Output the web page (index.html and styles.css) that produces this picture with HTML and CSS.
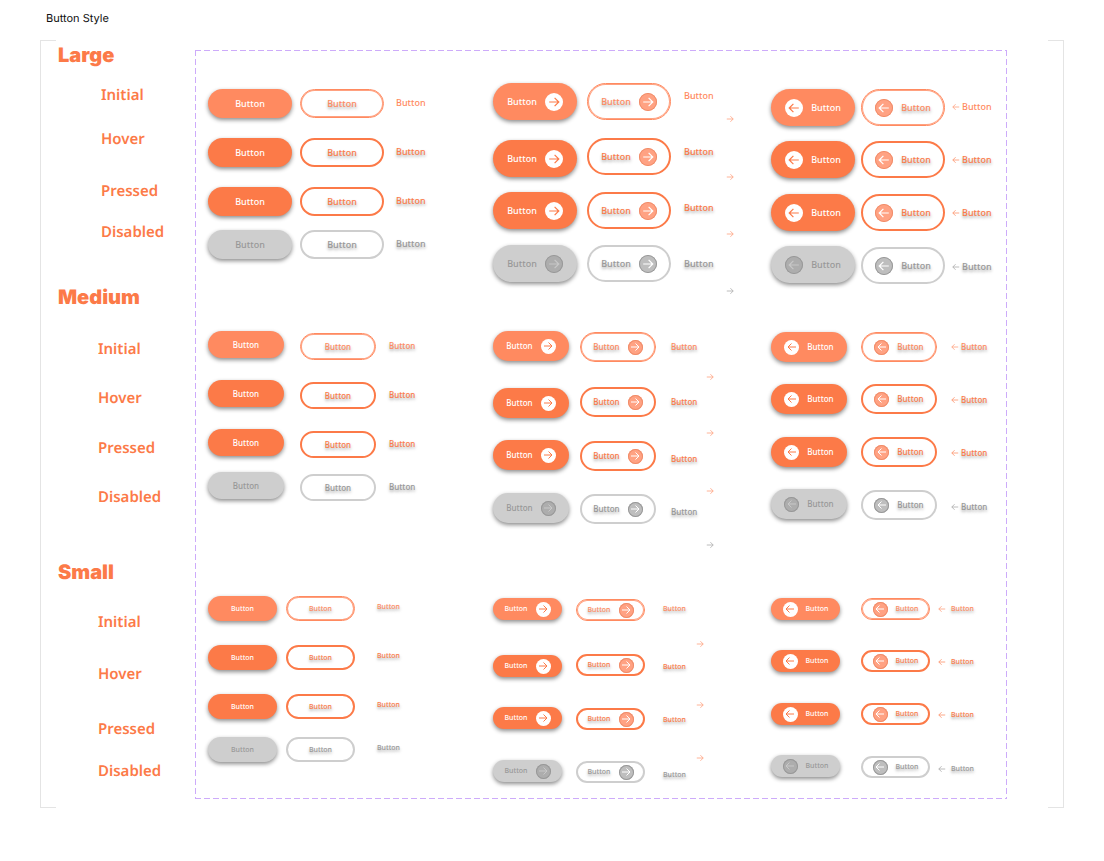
FILE: index.html
```
<!DOCTYPE html>
<html lang="en">
<head>
<meta charset="utf-8">
<meta name="viewport" content="width=device-width, initial-scale=1">
<title>Button Style</title>
<link rel="stylesheet" href="styles.css">
</head>
<body>
<h1 class="title">Button Style</h1>
<main class="board">
  <aside class="legend">
    <section class="legend-group large"><h2>Large</h2><ul><li>Initial</li><li>Hover</li><li>Pressed</li><li>Disabled</li></ul></section>
    <section class="legend-group medium"><h2>Medium</h2><ul><li>Initial</li><li>Hover</li><li>Pressed</li><li>Disabled</li></ul></section>
    <section class="legend-group small"><h2>Small</h2><ul><li>Initial</li><li>Hover</li><li>Pressed</li><li>Disabled</li></ul></section>
  </aside>
  <div class="frame" id="frame"></div>
</main>
<script src="buttons.js"></script>
</body>
</html>
```
FILE: buttons.js
```
const states = ["initial", "hover", "pressed", "disabled"];
const sizes = ["large", "medium", "small"];
const layouts = ["plain", "trailing", "leading"];
const kinds = ["filled", "outline", "text"];

const paths = {
  trailing: "M1 5h8M5.5 1.5 9 5 5.5 8.500",
  leading: "M9 5H1M4.500 1.500 1 5l3.500 3.500"
};

function arrow(layout) {
  return `<svg class="arrow" viewBox="0 0 10 10" aria-hidden="true"><path d="${paths[layout]}"/></svg>`;
}

function button(kind, layout, state) {
  const disabled = state === "disabled" ? " disabled" : "";
  const label = "<span>Button</span>";
  let content = label;
  if (kind === "text") {
    if (layout === "leading") content = arrow(layout) + label;
    if (layout === "trailing") content = label + `<i class="mark">${arrow(layout)}</i>`;
  } else if (layout !== "plain") {
    const badge = `<i class="badge">${arrow(layout)}</i>`;
    content = layout === "trailing" ? label + badge : badge + label;
  }
  return `<button type="button" class="btn ${kind} ${state}"${disabled}>${content}</button>`;
}

function stack(kind, layout) {
  return `<div class="stack ${kind}-stack">${states.map(s => button(kind, layout, s)).join("")}</div>`;
}

function arrows() {
  return `<div class="stack arrow-stack">${states.map(s => `<span class="loose ${s}">${arrow("trailing")}</span>`).join("")}</div>`;
}

document.getElementById("frame").innerHTML = sizes.map(size =>
  `<section class="size ${size}">${layouts.map(layout =>
    `<div class="group ${layout}">${kinds.map(k => stack(k, layout)).join("")}${layout === "trailing" ? arrows() : ""}</div>`
  ).join("")}</section>`
).join("");
```
FILE: styles.css
```
:root {
  --orange: #fc7a48;
  --orange-light: #ff8a60;
  --gray: #cecece;
  --gray-text: #989898;
  --line: #e4e4e4;
  --violet: #cdabfa;
}

* { box-sizing: border-box; }

body {
  margin: 0;
  background: #fff;
  font-family: "Noto Sans", sans-serif;
  text-rendering: geometricPrecision;
}

.title {
  margin: 0;
  padding: 10px 46px 14px;
  font: 400 11px/16px Inter, sans-serif;
  color: #111;
}

/* Board with corner brackets */
.board {
  display: grid;
  grid-template-columns: 154px 1fr;
  margin: 0 40px;
  padding: 10px 56px 9px 0;
  border: solid var(--line);
  border-width: 0 1px;
  background:
    linear-gradient(var(--line) 0 0) left top,
    linear-gradient(var(--line) 0 0) right top,
    linear-gradient(var(--line) 0 0) left bottom,
    linear-gradient(var(--line) 0 0) right bottom;
  background-size: 15px 1px;
  background-repeat: no-repeat;
}

/* Legend */
.legend { color: var(--orange); }
.legend-group { padding-left: 16px; }
.legend-group h2 {
  margin: 0;
  padding-left: 1px;
  font: 900 20px/24px Inter, sans-serif;
}
.legend-group ul {
  display: grid;
  margin: 0;
  padding: 0 0 0 41px;
  list-style: none;
  font-size: 15px;
  font-weight: 600;
  line-height: 20px;
}
.legend-group.large { height: 235px; margin-top: -7px; }
.legend-group.large ul { padding: 18px 0 0 44px; grid-template-rows: 44px 52px 41px 20px; }
.legend-group.medium { height: 275px; padding-top: 7px; }
.legend-group.medium ul { padding-top: 30px; grid-template-rows: 49px 50px 49px 20px; }
.legend-group.small { padding-top: 7px; }
.legend-group.small ul { padding-top: 28px; grid-template-rows: 52px 55px 42px 20px; }

/* Frame */
.frame {
  padding: 1px 1px 1px 13px;
  background:
    repeating-linear-gradient(90deg, var(--violet) 0 6px, transparent 6px 9px) top / 100% 1px,
    repeating-linear-gradient(90deg, var(--violet) 0 6px, transparent 6px 9px) bottom / 100% 1px,
    repeating-linear-gradient(var(--violet) 0 6px, transparent 6px 9px) left / 1px 100%,
    repeating-linear-gradient(var(--violet) 0 6px, transparent 6px 9px) right / 1px 100%;
  background-repeat: no-repeat;
}
.size {
  display: grid;
  grid-template-columns: 285fr 278fr 235fr;
}
.size.large { --w: 84px; --h: 37px; --badge: 18px; --arrow: 12px; --mini: 8px; font-size: 9px; height: 260px; }
.size.medium { --w: 76px; --h: 30px; --badge: 15px; --arrow: 10px; --mini: 8px; font-size: 8px; height: 265px; }
.size.small { --w: 69px; --h: 22px; --badge: 15px; --arrow: 10px; --mini: 8px; font-size: 7px; height: 222px; }
.large .plain { --h: 29px; }
.medium .plain { --h: 27px; }
.small .plain { --h: 25px; }

.group {
  display: flex;
  align-items: flex-start;
}
.stack {
  display: grid;
  align-items: start;
}

/* Row rhythm of each stack */
.plain .stack { grid-template-rows: 49px 49px 43px auto; }
.trailing .filled-stack { grid-template-rows: 57px 52px 53px auto; }
.trailing .outline-stack { grid-template-rows: 55px 54px 53px auto; }
.leading .filled-stack { grid-template-rows: 52px 53px 52px auto; }
.leading .outline-stack { grid-template-rows: 52px 53px 53px auto; }
.large .trailing .text-stack { grid-template-rows: 56px 56px 56px auto; }
.medium .trailing .text-stack { grid-template-rows: 55px 57px 53px auto; }
.small .trailing .text-stack { grid-template-rows: 58px 53px 55px auto; }
.leading .text-stack { grid-template-rows: 53px 53px 54px auto; }
.large .arrow-stack { grid-template-rows: 58px 57px 57px auto; }
.medium .arrow-stack { grid-template-rows: 56px 58px 54px auto; }
.small .arrow-stack { grid-template-rows: 61px 53px 57px auto; }

/* Where each stack begins */
.large .plain .stack { margin-top: 38px; }
.large .plain .text-stack { margin: 46px 0 0 12px; }
.large .plain .outline-stack { margin-left: 8px; }
.large .trailing .filled-stack { margin-top: 32px; }
.large .trailing .outline-stack { margin: 32px 0 0 10px; }
.large .trailing .text-stack { margin: 39px 0 0 13px; }
.large .trailing .arrow-stack { margin: 64px 0 0 12px; }
.large .leading .filled-stack { margin-top: 38px; }
.large .leading .outline-stack { margin: 38px 0 0 6px; }
.large .leading .text-stack { margin: 50px 0 0 7px; }

.medium .plain .filled-stack { margin-top: 20px; }
.medium .plain .outline-stack { margin: 22px 0 0 16px; }
.medium .plain .text-stack { margin: 29px 0 0 13px; }
.medium .trailing .filled-stack { margin-top: 20px; }
.medium .trailing .outline-stack { margin: 21px 0 0 11px; }
.medium .trailing .text-stack { margin: 30px 0 0 15px; }
.medium .trailing .arrow-stack { margin: 62px 0 0 9px; }
.medium .leading .filled-stack { margin-top: 21px; }
.medium .leading .outline-stack { margin: 21px 0 0 14px; }
.medium .leading .text-stack { margin: 30px 0 0 14px; }

.small .plain .stack { margin-top: 20px; }
.small .plain .outline-stack { margin-left: 9px; }
.small .plain .text-stack { margin: 25px 0 0 22px; }
.small .trailing .filled-stack { margin-top: 22px; }
.small .trailing .outline-stack { margin: 23px 0 0 14px; }
.small .trailing .text-stack { margin: 27px 0 0 18px; }
.small .trailing .arrow-stack { margin: 64px 0 0 10px; }
.small .leading .filled-stack { margin-top: 22px; }
.small .leading .outline-stack { margin: 22px 0 0 21px; }
.small .leading .text-stack { margin: 27px 0 0 8px; }

/* Buttons */
.btn {
  display: flex;
  align-items: center;
  justify-content: center;
  position: relative;
  margin: 0;
  padding: 0;
  border: 0;
  background: none;
  font: inherit;
  font-weight: 500;
  line-height: 12px;
  color: var(--orange);
  cursor: pointer;
}
.btn:disabled { cursor: default; color: var(--gray-text); }
.btn.initial { color: var(--orange-light); }

.filled, .outline {
  width: var(--w);
  height: var(--h);
  border-radius: 20px;
}
.btn.filled {
  background: var(--orange);
  color: #fff;
  box-shadow: 0 2px 4px rgba(0, 0, 0, .45);
}
.btn.filled.initial { background: var(--orange-light); }
.btn.filled.disabled { background: var(--gray); color: var(--gray-text); }

.btn.outline { border: 2px solid currentColor; }
.btn.outline.initial { border-width: 1px; box-shadow: inset 0 0 0 1px rgba(255, 138, 96, .8); }
.btn.outline.disabled { border-color: var(--gray); }
.outline span, .text span { text-shadow: 0 2px 3px rgba(0, 0, 0, .35); }
.large .text.initial span { text-shadow: none; }

.trailing .filled, .trailing .outline { gap: 8px; }
.leading .filled, .leading .outline { gap: 8px; }

.badge {
  display: grid;
  place-items: center;
  width: var(--badge);
  height: var(--badge);
  border-radius: 50%;
  background: #fff;
  color: var(--orange);
}
.outline .badge {
  background: #ffa283;
  color: #fff;
  box-shadow: inset 0 0 0 1px #f08c69;
}
.disabled .badge {
  background: #adadad;
  color: #c8c8c8;
  box-shadow: inset 0 0 0 1px #989898;
}
.outline.disabled .badge { background: #bebebe; color: #fff; }

.arrow {
  display: block;
  width: var(--arrow);
  height: var(--arrow);
  fill: none;
  stroke: currentColor;
  stroke-width: 1;
}
.text .arrow, .loose .arrow {
  width: var(--mini);
  height: var(--mini);
  opacity: .8;
}
.large .text, .medium .text { gap: 2px; }
.small .text { gap: 5px; }
.loose { color: var(--orange-light); }
.loose.disabled { color: var(--gray-text); }

/* Tiny arrow lying over the start of the label */
.text .mark {
  position: absolute;
  left: 4px;
  top: 5px;
}
.text .mark .arrow {
  width: 4px;
  height: 4px;
}
```
